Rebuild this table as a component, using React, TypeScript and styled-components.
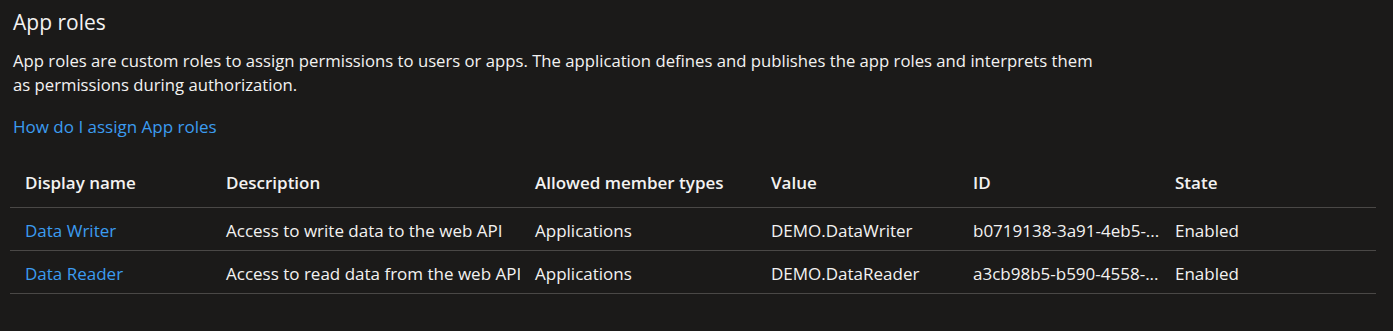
import styled, { createGlobalStyle } from "styled-components";

const GlobalStyle = createGlobalStyle`
  html, body {
    margin: 0;
    padding: 0;
    background: #1b1a19;
  }
  body {
    font-family: "Open Sans", "Noto Sans", sans-serif;
    color: #e1dfdd;
  }
`;

interface IRole {
  name: string;
  description: string;
  memberTypes: string;
  value: string;
  id: string;
  state: string;
}

const roles: IRole[] = [
  {
    name: "Data Writer",
    description: "Access to write data to the web API",
    memberTypes: "Applications",
    value: "DEMO.DataWriter",
    id: "b0719138-3a91-4eb5-...",
    state: "Enabled",
  },
  {
    name: "Data Reader",
    description: "Access to read data from the web API",
    memberTypes: "Applications",
    value: "DEMO.DataReader",
    id: "a3cb98b5-b590-4558-...",
    state: "Enabled",
  },
];

const headers = [
  "Display name",
  "Description",
  "Allowed member types",
  "Value",
  "ID",
  "State",
];

const App = () => {
  return (
    <>
      <GlobalStyle />
      <Page>
        <Title>App roles</Title>
        <Intro>
          App roles are custom roles to assign permissions to users or apps. The
          application defines and publishes the app roles and interprets them as
          permissions during authorization.
        </Intro>
        <HelpLink href="#">How do I assign App roles</HelpLink>
        <Table>
          <Row header>
            {headers.map((h) => (
              <HeadCell key={h}>{h}</HeadCell>
            ))}
          </Row>
          {roles.map((role) => (
            <Row key={role.value}>
              <Cell>
                <NameLink href="#">{role.name}</NameLink>
              </Cell>
              <Cell>{role.description}</Cell>
              <Cell>{role.memberTypes}</Cell>
              <Cell>{role.value}</Cell>
              <Cell>{role.id}</Cell>
              <Cell>{role.state}</Cell>
            </Row>
          ))}
        </Table>
      </Page>
    </>
  );
};
export default App;

const Page = styled.div`
  padding: 8px 17px 0 13px;
`;

const Title = styled.h2`
  margin: 0;
  font-size: 21px;
  font-weight: 400;
  line-height: 28px;
  color: #f3f2f1;
`;

const Intro = styled.p`
  margin: 13px 0 0;
  max-width: 1090px;
  font-size: 16.7px;
  line-height: 24px;
  color: #f3f2f1;
`;

const HelpLink = styled.a`
  display: inline-block;
  margin-top: 18px;
  font-size: 17px;
  line-height: 24px;
  color: #3b9cf0;
  text-decoration: none;
`;

const Table = styled.div`
  margin: 19px 0 0 -3px;
  width: 1366px;
`;

const Row = styled.div<{ header?: boolean }>`
  display: grid;
  grid-template-columns: 201px 309px 236px 202px 202px 216px;
  align-items: center;
  box-sizing: border-box;
  height: ${(props) => (props.header ? "50px" : "43px")};
  padding-top: ${(props) => (props.header ? "0" : "2px")};
  border-bottom: 1px solid #4a4846;
`;

const Cell = styled.div`
  padding-left: 15px;
  font-size: 17px;
  white-space: nowrap;
  overflow: hidden;
  color: #f3f2f1;
`;

const HeadCell = styled(Cell)`
  font-weight: 600;
`;

const NameLink = styled.a`
  color: #3b9cf0;
  text-decoration: none;
`;
